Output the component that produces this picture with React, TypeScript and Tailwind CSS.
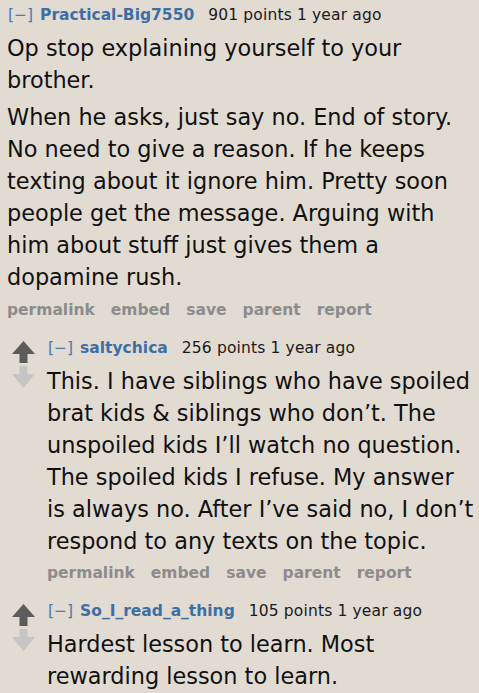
import React from 'react'

type Comment = {
  author: string
  points: number
  paragraphs: string[]
  showActions?: boolean
}

const parent: Comment = {
  author: 'Practical-Big7550',
  points: 901,
  paragraphs: [
    'Op stop explaining yourself to your brother.',
    'When he asks, just say no. End of story. No need to give a reason. If he keeps texting about it ignore him. Pretty soon people get the message. Arguing with him about stuff just gives them a dopamine rush.',
  ],
}

const replies: Comment[] = [
  {
    author: 'saltychica',
    points: 256,
    paragraphs: [
      'This. I have siblings who have spoiled brat kids & siblings who don\u2019t. The unspoiled kids I\u2019ll watch no question. The spoiled kids I refuse. My answer is always no. After I\u2019ve said no, I don\u2019t respond to any texts on the topic.',
    ],
    showActions: true,
  },
  {
    // actions row falls below the fold, so it's left out
    author: 'So_I_read_a_thing',
    points: 105,
    paragraphs: ['Hardest lesson to learn. Most rewarding lesson to learn.'],
    showActions: false,
  },
]

function Header({ c }: { c: Comment }) {
  return (
    <div className="flex h-[20px] leading-[20px] text-[15.5px] whitespace-nowrap">
      <span className="text-[#4a7ab0] pl-[1px]">[&minus;]</span>
      <span className="ml-[7px] font-bold text-[#3d6fa6]">{c.author}</span>
      <span className="ml-[14px] text-[#1a1a1a] tracking-[0.15px]">{c.points} points 1 year ago</span>
    </div>
  )
}

function Actions() {
  return (
    <div className="flex gap-[16px] h-[20px] leading-[20px] text-[15.5px] font-bold text-[#8c8c8c]">
      <span>permalink</span>
      <span>embed</span>
      <span>save</span>
      <span>parent</span>
      <span>report</span>
    </div>
  )
}

function Body({ c }: { c: Comment }) {
  return (
    <div className="text-[22.4px] leading-[32px] text-[#111]">
      {c.paragraphs.map((p, i) => (
        <p key={i} className={i > 0 ? 'mt-[5px]' : ''}>
          {p}
        </p>
      ))}
    </div>
  )
}

function Arrows() {
  return (
    <div className="flex flex-col items-center w-[23px] pt-[3px] gap-[3px] shrink-0">
      <svg width="23" height="22" viewBox="0 0 23 22">
        <polygon points="11.5,0 23,13 15.5,13 15.5,22 7.5,22 7.5,13 0,13" fill="#5c5c5c" />
      </svg>
      <svg width="23" height="22" viewBox="0 0 23 22">
        <polygon points="7.5,0 15.5,0 15.5,8 23,8 11.5,22 0,8 7.5,8" fill="#c5c5c5" />
      </svg>
    </div>
  )
}

export default function App() {
  return (
    <div className="min-h-screen bg-[#e2dbd2] font-['DejaVu_Sans',Verdana,sans-serif] pt-[5px] pl-[7px] pr-[4px] overflow-hidden">
      {/* parent comment */}
      <Header c={parent} />
      <div className="mt-[7px]">
        <Body c={parent} />
      </div>
      <div className="mt-[7px]">
        <Actions />
      </div>

      {/* replies */}
      <div className="mt-[18px] pl-[5px] flex flex-col gap-[18px]">
        {replies.map((r, i) => (
          <div key={i} className="flex gap-[12px]">
            <Arrows />
            <div>
              <Header c={r} />
              <div className="mt-[7px]">
                <Body c={r} />
              </div>
              {r.showActions && (
                <div className="mt-[6px]">
                  <Actions />
                </div>
              )}
            </div>
          </div>
        ))}
      </div>
    </div>
  )
}
